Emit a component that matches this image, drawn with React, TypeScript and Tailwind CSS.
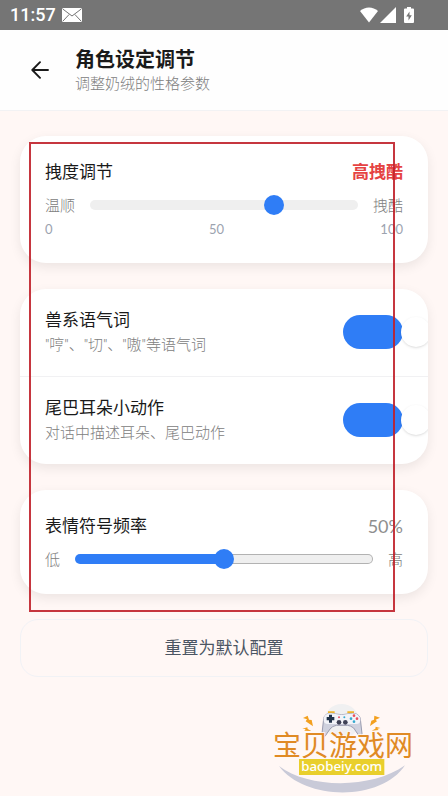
import React, { useState } from 'react';

const StatusBar = () => {
  return (
    <div className="flex h-[30px] items-center bg-[#757575] pl-[10px] pr-[34px] text-white">
      <span className="font-['Roboto',sans-serif] text-lg leading-[30px] font-medium">11:57</span>
      <svg className="ml-1.5 h-[14px] w-[20px]" viewBox="0 0 20 14" aria-hidden="true">
        <rect width="20" height="14" rx="1.5" fill="#fff" />
        <path d="M1 1.2 10 8l9-6.8M1 13l6.2-6.6M19 13l-6.2-6.6" fill="none" stroke="#757575" strokeWidth="1" />
      </svg>
      <svg className="ml-auto h-4 w-[18px]" viewBox="0 0 18 16" aria-hidden="true">
        <path d="M0 4C5-.8 13-.8 18 4L9 15.5Z" fill="#fff" />
      </svg>
      <svg className="ml-0.5 h-4 w-4" viewBox="0 0 16 16" aria-hidden="true">
        <path d="M16 0v16H0Z" fill="#fff" />
      </svg>
      <svg className="ml-2 h-4 w-[10px]" viewBox="0 0 10 16" aria-hidden="true">
        <path d="M3 0h4v1.500h2q1 0 1 1V15q0 1-1 1H1q-1 0-1-1V2.500q0-1 1-1h2Z" fill="#fff" />
        <path d="M5.500 4.500 2.200 9.500h2.300V13.500l3.300-5.200H5.500Z" fill="#757575" />
      </svg>
    </div>
  );
};

const Header = () => {
  return (
    <header className="flex h-[81px] items-center border-b border-[#f2f2f4] bg-[#fefefe] px-[30px]">
      <button type="button" aria-label="返回" className="flex size-5 items-center justify-center text-[#1a1a1a]">
        <svg className="h-[18px] w-[18px]" viewBox="0 0 18 18" fill="none" stroke="currentColor" strokeWidth="1.9" strokeLinecap="round" strokeLinejoin="round" aria-hidden="true">
          <path d="M17 9H1.500M9 1.200 1.300 9 9 16.800" />
        </svg>
      </button>
      <div className="ml-[25px]">
        <h1 className="text-xl leading-[26px] font-bold">角色设定调节</h1>
        <p className="text-[15px] leading-[22px] font-light text-[#808080]">调整奶绒的性格参数</p>
      </div>
    </header>
  );
};

const thumb =
  'h-[10px] min-w-0 flex-1 cursor-pointer appearance-none rounded-full [&::-webkit-slider-thumb]:size-5 [&::-webkit-slider-thumb]:appearance-none [&::-webkit-slider-thumb]:rounded-full [&::-webkit-slider-thumb]:bg-[#2f7df6]';

type ToggleRowProps = {
  id: string;
  title: string;
  desc: string;
};

const ToggleRow = ({ id, title, desc }: ToggleRowProps) => {
  const [on, setOn] = useState(true);

  return (
    <div className="flex items-center justify-between px-[25px] pt-[19px] pb-5">
      <div>
        <label htmlFor={id} className="block text-[17px] leading-6">
          {title}
        </label>
        <p className="mt-0.5 font-['Roboto','Noto_Sans_CJK_SC',sans-serif] text-[15px] leading-[22px] font-light text-[#808080]">
          {desc}
        </p>
      </div>
      <label className="relative h-[34px] w-[60px] shrink-0 cursor-pointer">
        <input
          id={id}
          type="checkbox"
          checked={on}
          onChange={(e) => setOn(e.target.checked)}
          className="peer sr-only"
        />
        <span className="block h-full rounded-full bg-gray-200 peer-checked:bg-[#2f7df6]" />
        <span className="absolute top-0.5 left-0.5 size-[30px] rounded-full bg-white shadow-sm peer-checked:left-[58px]" />
      </label>
    </div>
  );
};

const SiteLogo = () => {
  return (
    <svg className="h-[92px] w-[150px]" viewBox="15 21 450 276" aria-label="宝贝游戏网">
      {/* Swoosh */}
      <path d="M42 210C130 278 320 280 420 208C350 316 120 316 42 210Z" fill="#c9cad8" />
      <circle cx="230" cy="76" r="52" fill="#f0f0f1" />
      {/* Gamepad */}
      <path d="M189 46h20v6h-20ZM247 46h20v6h-20Z" fill="#f0b429" />
      <path d="M176 68C178 53 194 49 211 54Q230 58 249 54C268 49 284 54 286 69L291 113Q290 126 283 121L266 96Q257 89 248 88H214Q202 90 195 99L180 121Q172 127 171 112Z" fill="#cfd1de" stroke="#9a9cb0" strokeWidth="3" />
      <path d="M176 68C178 53 194 49 211 54Q230 58 249 54C268 49 284 54 286 69Q288 84 273 84H190Q174 84 176 68Z" fill="#f2f3f8" />
      <path d="M192 56h9v7h7v10h-7v7h-9v-7h-7v-10h7Z" fill="#23344b" />
      <circle cx="222" cy="79" r="7" fill="#3f4256" />
      <circle cx="241" cy="79" r="7" fill="#3f4256" />
      <circle cx="222" cy="64" r="3" fill="#e9505f" />
      <circle cx="238" cy="64" r="3" fill="#34a9cf" />
      <circle cx="267" cy="59" r="4" fill="#e9505f" />
      <circle cx="258" cy="68" r="4" fill="#34a9cf" />
      <circle cx="276" cy="68" r="4" fill="#e9505f" />
      <circle cx="267" cy="77" r="4" fill="#34a9cf" />
      <text x="24" y="179" fontSize="84" fill="#e08a24" stroke="#fff7f5" strokeWidth="5" paintOrder="stroke">
        宝贝游戏网
      </text>
      {/* Sparks */}
      <g fill="#f3a01f">
        <path d="M114 66L128 59L132 71L140 72L144 91L122 76L126 70Z" />
        <path d="M345 65L328 59L327 71L319 74L315 90L336 76L332 71Z" />
        <path d="M112 98L127 94L128 99L139 105L118 104L122 99Z" />
        <path d="M346 96L332 92L331 98L320 104L341 102L337 98Z" />
      </g>
      <rect x="102" y="189" width="256" height="48" fill="#e9cf2c" />
      <text x="230" y="226" fontSize="40" fontWeight="500" fill="#fff" textAnchor="middle" fontFamily="Noto Sans, sans-serif">
        baobeiy.com
      </text>
    </svg>
  );
};

const App = () => {
  const [attitude, setAttitude] = useState(70);
  const [emoji, setEmoji] = useState(50);

  return (
    <div className="min-h-screen bg-[#fff7f5] font-['Lato','Noto_Sans_CJK_SC',sans-serif] text-[#1a1a1a]">
      <StatusBar />
      <Header />

      <main className="px-5 pt-[25px]">
        <div className="relative flex flex-col gap-[26px]">
          {/* Attitude Section */}
          <section className="rounded-[26px] bg-white px-[25px] py-6 shadow-[0_4px_12px_rgba(0,0,0,0.08)]">
            <div className="flex items-center justify-between text-[17px] leading-6">
              <label htmlFor="attitude">拽度调节</label>
              <span className="font-bold text-[#e54343]">高拽酷</span>
            </div>
            <div className="mt-[10px] flex items-center gap-[15px] text-[15px] leading-[22px] font-light text-[#808080]">
              <span>温顺</span>
              <input
                id="attitude"
                type="range"
                value={attitude}
                onChange={(e) => setAttitude(Number(e.target.value))}
                className={`${thumb} bg-[#efefef]`}
              />
              <span>拽酷</span>
            </div>
            <div className="mt-[3px] flex justify-between text-[13px] leading-5 text-[#9ca3af]">
              <span>0</span>
              <span>50</span>
              <span>100</span>
            </div>
          </section>

          {/* Toggle Section */}
          <section className="divide-y divide-[#f1f1f3] overflow-hidden rounded-[26px] bg-white shadow-[0_4px_12px_rgba(0,0,0,0.08)]">
            <ToggleRow id="particles" title="兽系语气词" desc={'"哼"、"切"、"嗷"等语气词'} />
            <ToggleRow id="gestures" title="尾巴耳朵小动作" desc="对话中描述耳朵、尾巴动作" />
          </section>

          {/* Emoji Section */}
          <section className="rounded-[26px] bg-white px-[25px] py-6 shadow-[0_4px_12px_rgba(0,0,0,0.08)]">
            <div className="flex items-center justify-between text-[17px] leading-6">
              <label htmlFor="emoji">表情符号频率</label>
              <span className="text-lg leading-6 text-[#8e8e8e]">{emoji}%</span>
            </div>
            <div className="mt-[10px] flex items-center gap-[15px] text-[15px] leading-[22px] font-light text-[#808080]">
              <span>低</span>
              <input
                id="emoji"
                type="range"
                value={emoji}
                onChange={(e) => setEmoji(Number(e.target.value))}
                className={`${thumb} border border-transparent`}
                style={{
                  background: `linear-gradient(to right, #2f7df6 ${emoji}%, transparent ${emoji}%) border-box, linear-gradient(#efefef, #efefef) padding-box, linear-gradient(#b2b2b2, #b2b2b2) border-box`,
                }}
              />
              <span>高</span>
            </div>
          </section>

          {/* Highlight frame over the cards */}
          <div className="pointer-events-none absolute top-1.5 right-[33px] -bottom-[18px] left-[9px] border-2 border-[#c0202a]/90" />
        </div>

        <button
          type="button"
          className="mt-[25px] h-[58px] w-full rounded-[18px] border border-[#f1f2f5] text-[17px] text-[#4b5563]"
        >
          重置为默认配置
        </button>
      </main>

      <footer className="flex justify-end pt-[26px] pr-7">
        <SiteLogo />
      </footer>
    </div>
  );
};

export default App;
